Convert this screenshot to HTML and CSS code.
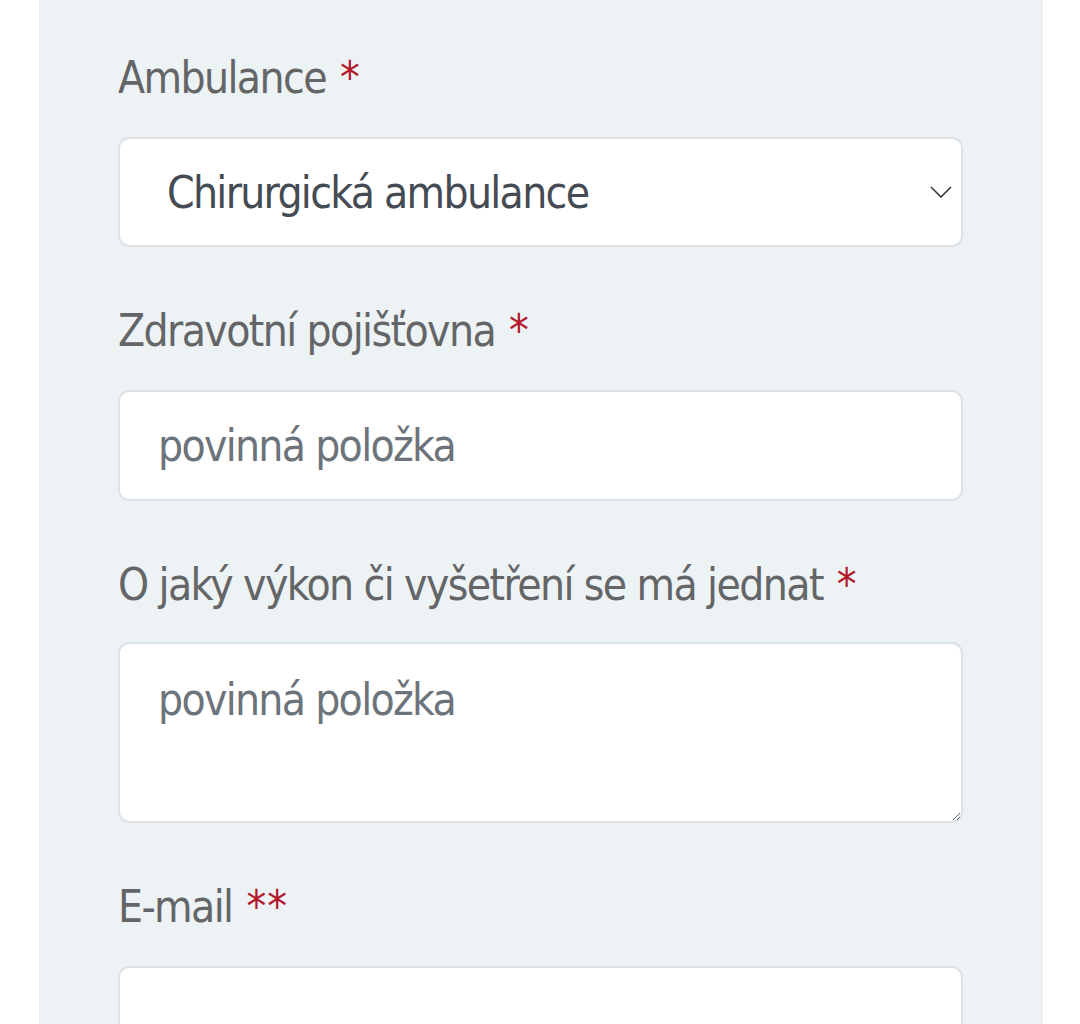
FILE: index.html
```html
<!DOCTYPE html>
<html lang="cs">
<head>
<meta charset="utf-8">
<link rel="stylesheet" href="styles.css">
</head>
<body>
<div class="panel">
  <form class="form">
    <div class="field">
      <label class="label" for="amb">Ambulance <span class="req">*</span></label>
      <select id="amb" class="control select">
        <option>Chirurgická ambulance</option>
      </select>
    </div>
    <div class="field">
      <label class="label" for="poj">Zdravotní pojišťovna <span class="req">*</span></label>
      <input id="poj" class="control input" type="text" placeholder="povinná položka">
    </div>
    <div class="field">
      <label class="label" for="vyk">O jaký výkon či vyšetření se má jednat <span class="req">*</span></label>
      <textarea id="vyk" class="control textarea" placeholder="povinná položka"></textarea>
    </div>
    <div class="field">
      <label class="label" for="mail">E-mail <span class="req">**</span></label>
      <input id="mail" class="control input" type="email">
    </div>
  </form>
</div>
</body>
</html>
```
FILE: styles.css
```css
html, body {
  margin: 0;
  padding: 0;
  background: #ffffff;
  height: 100%;
  overflow: hidden;
}

.panel {
  margin-left: 39px;
  width: 1004px;
  min-height: 1024px;
  box-sizing: border-box;
  background: #edf2f5;
  padding: 52px 80px 0 79px;
}

.form {
  display: flex;
  flex-direction: column;
  gap: 58px;
}

.field {
  display: flex;
  flex-direction: column;
}

.label {
  font-family: "DejaVu Sans Condensed", "Liberation Sans Narrow", "Liberation Sans", sans-serif;
  font-size: 44px;
  line-height: 52px;
  letter-spacing: -1.6px;
  color: #636567;
  margin-bottom: 33px;
}

.req {
  color: #b3192a;
  letter-spacing: 1px;
  margin-left: 3px;
}

.control {
  box-sizing: border-box;
  width: 100%;
  margin: 0;
  border: 2px solid #dce2e6;
  border-radius: 11px;
  background-color: #ffffff;
  font-family: "DejaVu Sans Condensed", "Liberation Sans Narrow", "Liberation Sans", sans-serif;
  font-size: 44px;
  letter-spacing: -1.7px;
  color: #454b52;
  outline: none;
}

.control::placeholder {
  color: #6c737a;
  opacity: 1;
}

.select {
  height: 110px;
  padding: 0 60px 0 47px;
  appearance: none;
  -webkit-appearance: none;
  background-image: url("data:image/svg+xml,%3Csvg xmlns='http://www.w3.org/2000/svg' width='22' height='12' viewBox='0 0 22 12'%3E%3Cpath d='M1 1l10 10L21 1' fill='none' stroke='%23343a40' stroke-width='1.6'/%3E%3C/svg%3E");
  background-repeat: no-repeat;
  background-position: right 9px center;
  background-size: 22px 12px;
}

.input {
  height: 111px;
  padding: 0 38px;
}

.textarea {
  height: 181px;
  margin-top: -2px;
  padding: 23px 38px;
  line-height: 66px;
  resize: vertical;
}
```
